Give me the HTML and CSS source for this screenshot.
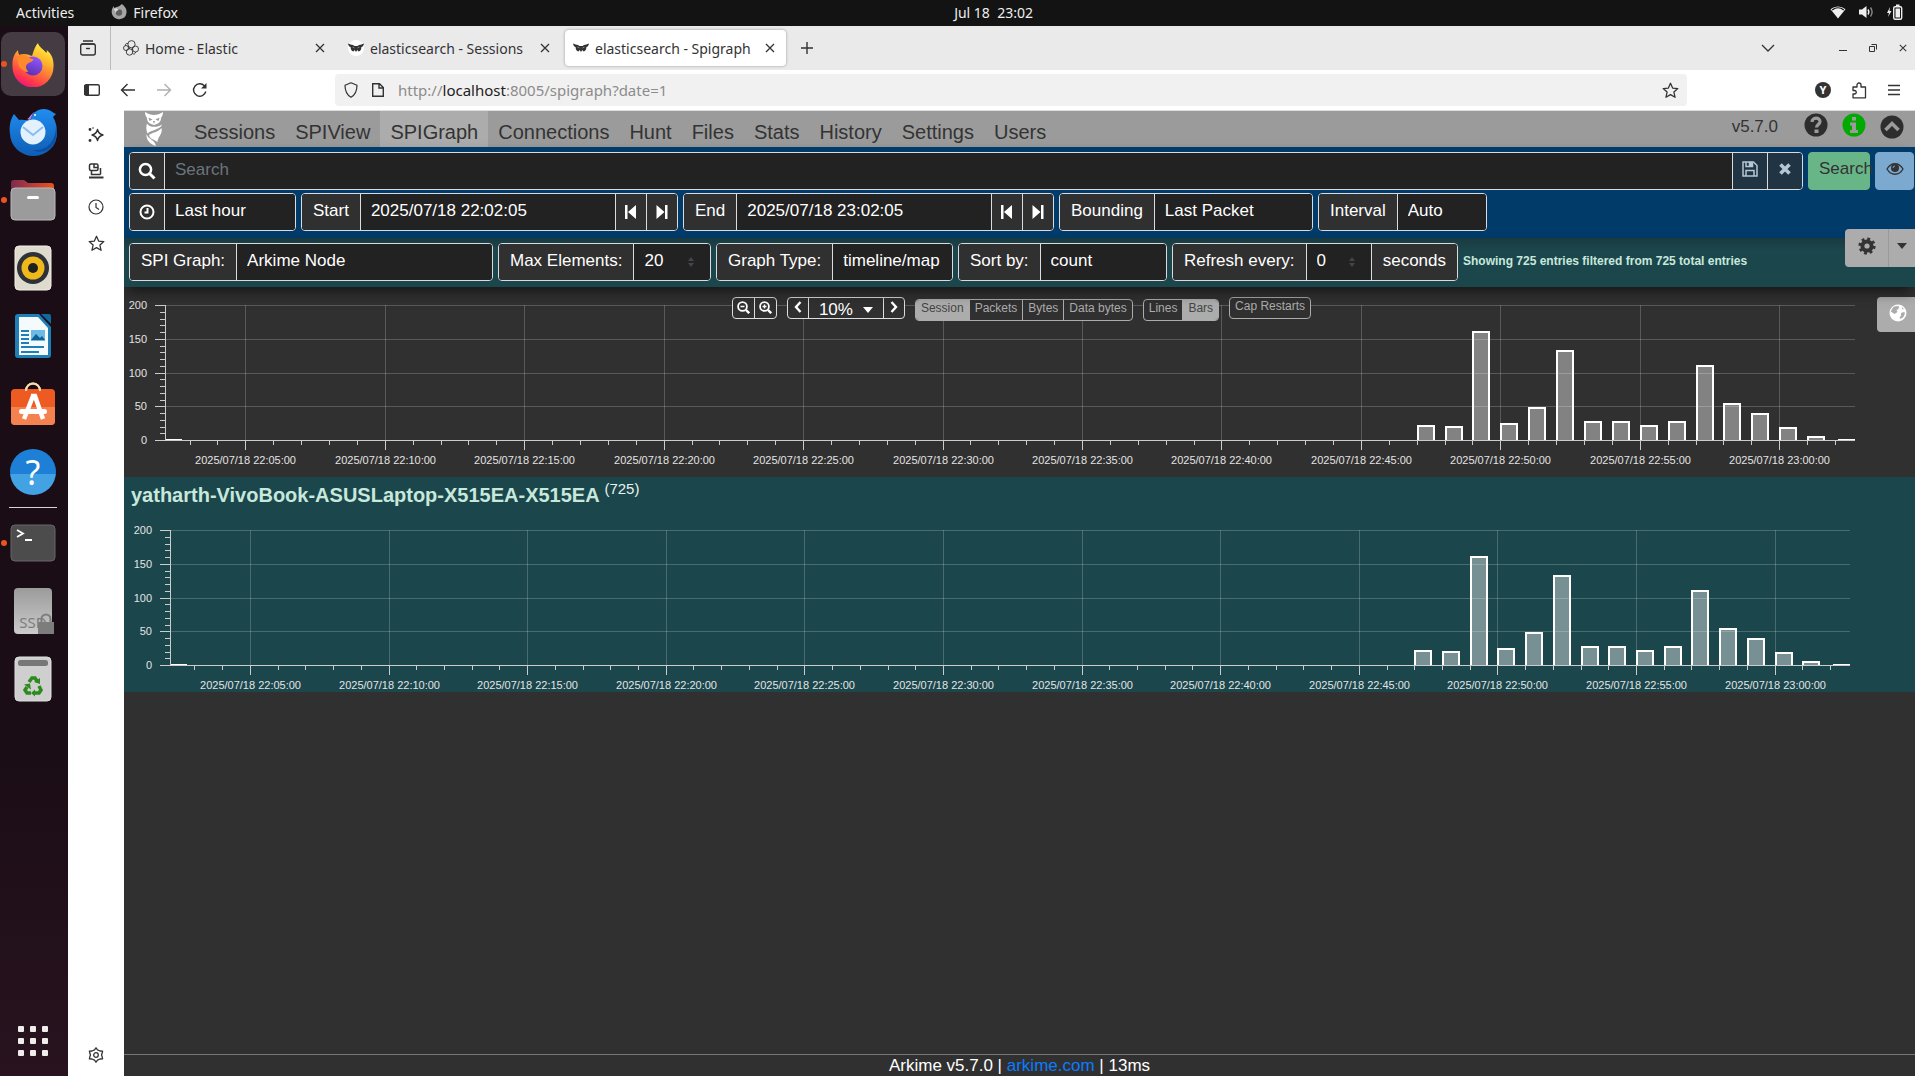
FILE: index.html
```html
<!DOCTYPE html>
<html lang="en">
<head>
<meta charset="utf-8">
<title>elasticsearch - Spigraph</title>
<link rel="stylesheet" href="styles.css">
</head>
<body>
<svg class="defs" aria-hidden="true">
  <defs>
    <linearGradient id="fire" x1="0.8" y1="0" x2="0.3" y2="1"><stop offset="0" stop-color="#fff44f"/><stop offset=".3" stop-color="#ffc02c"/><stop offset=".6" stop-color="#ff7139"/><stop offset=".85" stop-color="#ff3150"/><stop offset="1" stop-color="#e31587"/></linearGradient>
    <linearGradient id="purple" x1="0.7" y1="0" x2="0.3" y2="1"><stop offset="0" stop-color="#9059ff"/><stop offset="1" stop-color="#5b2fae"/></linearGradient>
    <linearGradient id="blue" x1="0" y1="0" x2="0" y2="1"><stop offset="0" stop-color="#1f8df0"/><stop offset="1" stop-color="#0f5db5"/></linearGradient>
    <linearGradient id="folder" x1="0" y1="0" x2="1" y2="0"><stop offset="0" stop-color="#7d2a50"/><stop offset="1" stop-color="#e95420"/></linearGradient>
  </defs>
  <symbol id="i-x" viewBox="0 0 10 10"><path d="M1 1l8 8M9 1L1 9" fill="none" stroke="currentColor" stroke-width="1.3"/></symbol>
  <symbol id="i-owl" viewBox="0 0 16 16"><circle cx="8" cy="8" r="8" fill="#fff"/><path d="M0 3.500c2 .8 3.500 1.300 5 1.500l1.500 1h3L11 5c1.500-.2 3-.7 5-1.500-.3 2-1.300 3.200-2.700 3.800.2 2.200-.8 4-2.800 4.200L9.300 10 8 12l-1.300-2-1.200 1.500c-2-.2-3-2-2.800-4.200C1.300 6.700.3 5.500 0 3.500z" fill="#333"/><path d="M4.500 7l2 1M11.500 7l-2 1" stroke="#aaa" stroke-width=".7"/></symbol>
  <symbol id="i-star" viewBox="0 0 16 16"><path d="M8 1.200l2 4.500 4.900.5-3.700 3.300 1.100 4.900L8 11.900l-4.300 2.500 1.100-4.900L1.100 6.200 6 5.700z" fill="none" stroke="currentColor" stroke-width="1.200" stroke-linejoin="round"/></symbol>
  <symbol id="i-prev" viewBox="0 0 12 16"><path d="M0 1h2.500v14H0zM11 1v14L3 8z" fill="currentColor"/></symbol>
  <symbol id="i-next" viewBox="0 0 12 16"><path d="M9 1h2.500v14H9zM.5 1v14l8-7z" fill="currentColor"/></symbol>
  <symbol id="i-spin" viewBox="0 0 8 12"><path d="M4 1l3 4H1zM4 11l3-4H1z" fill="#42464b"/></symbol>
</svg>

<header class="topbar">
  <div class="topbar-left">
    <button class="plain">Activities</button>
    <button class="plain app"><svg width="16" height="16" viewBox="0 0 16 16"><path d="M11 0c3 2.500 5 5 4.500 9A7.500 7.500 0 0 1 1 10C0 7 1 4 3 2v2l3-1c2-.5 3-1.500 5-3z" fill="#a5a5a5"/><circle cx="8" cy="8.500" r="3.200" fill="#5e5e5e"/><path d="M3 5c2-1 4 0 5 1-2 0-3 1-3 3" fill="#ddd"/></svg>Firefox</button>
  </div>
  <button class="plain clock">Jul 18&nbsp; 23:02</button>
  <div class="topbar-right">
    <svg width="16" height="14" viewBox="0 0 16 14"><path d="M8 13.500L.5 4.200a11.500 11.500 0 0 1 15 0z" fill="#eee"/><path d="M2.200 4.900a9.500 9.500 0 0 1 11.600 0" fill="none" stroke="#131313" stroke-width="1.300"/></svg>
    <svg width="16" height="14" viewBox="0 0 16 14"><path d="M1 4.500h3L8.500 1v12L4 9.500H1z" fill="#eee"/><path d="M10 4.500q1.700 2.500 0 5" fill="none" stroke="#eee" stroke-width="1.400"/><path d="M12.500 2.500q3.200 4.500 0 9" fill="none" stroke="#888" stroke-width="1.400"/></svg>
    <svg width="17" height="16" viewBox="0 0 17 16"><path d="M4 3L1 9h2l-1 4 3.500-6H3.500z" fill="#eee"/><rect x="7.700" y="2.700" width="8" height="12.600" rx="1.500" fill="none" stroke="#eee" stroke-width="1.400"/><path d="M10 .5h3.500V2H10zM9.500 4.500h4.500v9H9.500z" fill="#eee"/></svg>
  </div>
</header>

<div class="desktop">
  <nav class="dock" aria-label="Dock">
    <button class="dock-item active running" aria-label="Firefox">
      <svg width="46" height="46" viewBox="0 0 46 46"><path d="M28 2c1 4 5 6 8 9.500 1 1 1-1.500.6-2.500C42 13 44 19 43.500 26A20.500 20.500 0 0 1 2.500 26C2 18 4 13 8 9c0 3 1 5 2 5 4-2 8-.5 12 1 2-6 3-10 6-13z" fill="url(#fire)"/><circle cx="23" cy="25" r="9.500" fill="url(#purple)"/><path d="M9 14c4-1 7 0 9.500 2.500 2 1.500 4 1 5 2-1 3-5 2.500-6 4.500-3 2-1 6 1 8-7 0-13-7-9.500-17z" fill="#ff8a2b"/></svg>
    </button>
    <button class="dock-item" aria-label="Thunderbird">
      <svg width="50" height="50" viewBox="0 0 50 50"><path d="M6 7l5 6c4-1 8 1 12 0 1-7 6-11 13-11 5 0 8 3 12 5l-3 3c3 5 4 10 4 16a23 22 0 0 1-47 1C1 20 2 13 6 7z" fill="url(#blue)"/><path d="M48 18c0 18-10 26-23 25 12 6 24-3 24-20z" fill="#0d4f9f"/><circle cx="25" cy="25" r="12.500" fill="#e3f1ff"/><path d="M15 20l10 8 10-8" fill="none" stroke="#8bbcf0" stroke-width="2"/><path d="M19 12c3-1 4-6 8-7-4 3-3 6-5 8z" fill="#a78bfa"/><circle cx="27" cy="8" r="1" fill="#fff"/></svg>
    </button>
    <button class="dock-item running" aria-label="Files">
      <svg width="46" height="42" viewBox="0 0 46 42"><path d="M1 12V4a3 3 0 0 1 3-3h10l4 3h23a3 3 0 0 1 3 3v9z" fill="url(#folder)"/><rect x="1" y="9" width="44" height="32" rx="4" fill="#9b9b9b" stroke="#b9b9b9"/><rect x="17" y="17" width="12" height="3" rx="1.500" fill="#fff"/></svg>
    </button>
    <button class="dock-item" aria-label="Rhythmbox">
      <svg width="38" height="46" viewBox="0 0 38 46"><rect x="1" y="1" width="36" height="44" rx="4" fill="#dedace" stroke="#f2efe6"/><circle cx="19" cy="23" r="16" fill="#2e3138"/><circle cx="19" cy="23" r="11.500" fill="#efb91c"/><circle cx="19" cy="23" r="5" fill="#202020"/></svg>
    </button>
    <button class="dock-item" aria-label="LibreOffice Writer">
      <svg width="38" height="46" viewBox="0 0 38 46"><path d="M4 1h21l12 13v28a3 3 0 0 1-3 3H4a3 3 0 0 1-3-3V4a3 3 0 0 1 3-3z" fill="#1f80b8"/><path d="M27 1h8q2 0 2 2v8z" fill="#0e6a9f"/><path d="M5 4h19l10 11v27H5z" fill="#f5fafd"/><path d="M7 18h8M7 22h8M7 26h8M7 30h8M7 34h23M7 39h18" stroke="#1f80b8" stroke-width="2"/><rect x="17" y="17" width="14" height="11" fill="#6dbbe5"/><path d="M17 27l5-6 4 4 2-2 3 4z" fill="#0e5f92"/></svg>
    </button>
    <button class="dock-item" aria-label="Ubuntu Software">
      <svg width="46" height="44" viewBox="0 0 46 44"><path d="M16 9c0-10 14-10 14 0" fill="none" stroke="#f6dcae" stroke-width="2"/><rect x="1" y="7" width="44" height="36" rx="4" fill="#ee5b22"/><path d="M1 25h44v14a4 4 0 0 1-4 4H5a4 4 0 0 1-4-4z" fill="#f3824f"/><path d="M21 14h4l8 23M23 14l-9 23" fill="none" stroke="#fff" stroke-width="4.500"/><rect x="9" y="27" width="28" height="5" rx="2.500" fill="#fff"/><path d="M16 9c0-10 14-10 14 0" fill="none" stroke="#f6dcae" stroke-width="2"/></svg>
    </button>
    <button class="dock-item help" aria-label="Help">?</button>
    <hr class="dock-sep">
    <button class="dock-item running" aria-label="Terminal">
      <svg width="46" height="38" viewBox="0 0 46 38"><rect x="1" y="1" width="44" height="36" rx="4" fill="#4c4c4c" stroke="#666"/><path d="M7 6l6 3.500L7 13M15 16h7" fill="none" stroke="#fff" stroke-width="1.800"/></svg>
    </button>
    <button class="dock-item ssd" aria-label="SSD drive"><span class="ssd-label">SSD</span>
      <svg class="lock" width="16" height="22" viewBox="0 0 16 22"><path d="M3.500 10V6a4.500 4.500 0 0 1 9 0v4" fill="none" stroke="#7d7d7d" stroke-width="2"/><path d="M0 9h16v12H0z" fill="#7d7d7d"/></svg>
    </button>
    <button class="dock-item" aria-label="Trash">
      <svg width="38" height="46" viewBox="0 0 38 46"><rect x="1" y="1" width="36" height="44" rx="4" fill="#cfcfcf" stroke="#dedede"/><rect x="4" y="4" width="30" height="6" rx="2.500" fill="#777"/><g fill="none" stroke="#2d8a1f" stroke-width="3.500"><path d="M15 26l3-4h3l2 3"/><path d="M25 30l2 4-2 3h-4"/><path d="M17 37h-4l-2-3 2-3"/></g><path d="M26 22v6l-6-2zM21 33.500v7l-4-3.500zM10 28.500l6-1 1 6z" fill="#2d8a1f"/></svg>
    </button>
    <button class="dock-item apps" aria-label="Show Applications">
      <svg width="30" height="30" viewBox="0 0 30 30" fill="#efedec"><rect width="6" height="6" rx="1"/><rect x="12" width="6" height="6" rx="1"/><rect x="24" width="6" height="6" rx="1"/><rect y="12" width="6" height="6" rx="1"/><rect x="12" y="12" width="6" height="6" rx="1"/><rect x="24" y="12" width="6" height="6" rx="1"/><rect y="24" width="6" height="6" rx="1"/><rect x="12" y="24" width="6" height="6" rx="1"/><rect x="24" y="24" width="6" height="6" rx="1"/></svg>
    </button>
  </nav>

  <div class="browser">
    <div class="tabstrip">
      <button class="plain recent" aria-label="Recent tabs"><svg width="16" height="16" viewBox="0 0 16 16" fill="none" stroke="currentColor" stroke-width="1.400"><path d="M3 1h10M1.500 4h13"/><rect x=".7" y="4" width="14.600" height="11" rx="2"/><path d="M6 8.500h4"/></svg></button>
      <div class="tabs">
        <div class="tab"><svg width="16" height="16" viewBox="0 0 16 16" fill="none" stroke="currentColor" stroke-width=".9"><circle cx="8.500" cy="4.200" r="3.600"/><circle cx="3" cy="8" r="2.500"/><circle cx="12.500" cy="9" r="3"/><circle cx="6.500" cy="12" r="3.200"/><path d="M5.200 6l1.500 3M9 7.700L9.600 10M2.500 5.500C2 4.500 3 3 5 3.500M9.500 13.500c1.500 1 3 .5 3-1.500"/></svg><span class="tab-title">Home - Elastic</span><button class="plain" aria-label="Close tab"><svg width="10" height="10"><use href="#i-x"/></svg></button></div>
        <div class="tab"><svg width="16" height="16"><use href="#i-owl"/></svg><span class="tab-title">elasticsearch - Sessions</span><button class="plain" aria-label="Close tab"><svg width="10" height="10"><use href="#i-x"/></svg></button></div>
        <div class="tab current"><svg width="16" height="16"><use href="#i-owl"/></svg><span class="tab-title">elasticsearch - Spigraph</span><button class="plain" aria-label="Close tab"><svg width="10" height="10"><use href="#i-x"/></svg></button></div>
      </div>
      <button class="plain newtab" aria-label="New tab"><svg width="12" height="12" viewBox="0 0 12 12"><path d="M6 0v12M0 6h12" stroke="currentColor" stroke-width="1.400"/></svg></button>
      <div class="window-controls">
        <button class="plain list-tabs" aria-label="List all tabs"><svg width="14" height="8" viewBox="0 0 14 8"><path d="M1 1l6 6 6-6" fill="none" stroke="currentColor" stroke-width="1.300"/></svg></button>
        <button class="plain" aria-label="Minimize"><svg width="8" height="10" viewBox="0 0 8 10"><path d="M0 7.500h8" stroke="currentColor"/></svg></button>
        <button class="plain" aria-label="Restore"><svg width="8" height="8" viewBox="0 0 8 8" fill="none" stroke="currentColor"><path d="M.5 2.500h5v5h-5zM2.500.5h5v5"/></svg></button>
        <button class="plain" aria-label="Close window"><svg width="8" height="8"><use href="#i-x"/></svg></button>
      </div>
    </div>

    <div class="toolbar">
      <div class="nav-buttons">
        <button class="plain" aria-label="Sidebar"><svg width="16" height="12" viewBox="0 0 16 12"><rect x=".7" y=".7" width="14.600" height="10.600" rx="1.500" fill="none" stroke="currentColor" stroke-width="1.400"/><path d="M0 1h5v10H0z" fill="currentColor"/></svg></button>
        <button class="plain" aria-label="Back"><svg width="16" height="14" viewBox="0 0 16 14"><path d="M15 7H1.500M7.500 1l-6 6 6 6" fill="none" stroke="currentColor" stroke-width="1.400"/></svg></button>
        <button class="plain" disabled aria-label="Forward"><svg width="16" height="14" viewBox="0 0 16 14"><path d="M1 7h13.500M8.500 1l6 6-6 6" fill="none" stroke="currentColor" stroke-width="1.400"/></svg></button>
        <button class="plain" aria-label="Reload"><svg width="16" height="16" viewBox="0 0 16 16"><path d="M13.800 9.500A6.200 6.200 0 1 1 12.500 4" fill="none" stroke="currentColor" stroke-width="1.400"/><path d="M14.500 1v5.500H9z" fill="currentColor"/></svg></button>
      </div>
      <div class="urlbar">
        <svg width="14" height="16" viewBox="0 0 14 16"><path d="M7 .8l6 2.400c0 6-1.500 9.500-6 12-4.500-2.500-6-6-6-12z" fill="none" stroke="currentColor" stroke-width="1.200" stroke-linejoin="round"/></svg>
        <svg width="12" height="14" viewBox="0 0 12 14"><path d="M1.500.7h6L11.300 4.500v8.800H.7V.7zM7 .7v4.300h4.300" fill="none" stroke="currentColor" stroke-width="1.400"/></svg>
        <a class="url" href="#">http://<b>localhost</b>:8005/spigraph?date=1</a>
        <button class="plain" aria-label="Bookmark"><svg width="17" height="17"><use href="#i-star"/></svg></button>
      </div>
      <div class="toolbar-right">
        <button class="avatar" aria-label="Account">Y</button>
        <button class="plain" aria-label="Extensions"><svg width="15" height="17" viewBox="0 0 15 17"><path d="M1 15.800V12h1.500a1.700 1.700 0 0 0 0-3.500H1V5h4V3a2 2 0 0 1 4 0v2h4.500v10.800z" fill="none" stroke="currentColor" stroke-width="1.300" stroke-linejoin="round"/></svg></button>
        <button class="plain" aria-label="Menu"><svg width="12" height="12" viewBox="0 0 12 12"><path d="M0 1.500h12M0 6h12M0 10.500h12" stroke="currentColor" stroke-width="1.300"/></svg></button>
      </div>
    </div>

    <div class="browser-body">
      <aside class="sidebar">
        <button class="plain" aria-label="AI chatbot"><svg width="16" height="16" viewBox="0 0 16 16"><path d="M9.500 2.500Q10.500 7 15 8q-4.500 1-5.500 5.500Q8.500 9 4 8 8.500 7 9.500 2.500z" fill="none" stroke="currentColor" stroke-width="1.400" stroke-linejoin="round"/><circle cx="2" cy="2.500" r="1.400" fill="currentColor"/><circle cx="2" cy="13.500" r="1.400" fill="currentColor"/><circle cx="5" cy="1" r=".8" fill="currentColor"/></svg></button>
        <button class="plain" aria-label="Synced tabs"><svg width="16" height="16" viewBox="0 0 16 16" fill="none" stroke="currentColor" stroke-width="1.500"><rect x="1.500" y="1" width="8.500" height="6.500" rx="1.500"/><path d="M6 1v3.500h4M12.500 5v6.500M3.500 7.500v4h9"/><path d="M1 14.500h14.500" stroke-width="2"/></svg></button>
        <button class="plain" aria-label="History"><svg width="16" height="16" viewBox="0 0 16 16" fill="none" stroke="currentColor" stroke-width="1.200"><circle cx="8" cy="8" r="7"/><path d="M8 4v4.500l3 2"/></svg></button>
        <button class="plain" aria-label="Bookmarks"><svg width="17" height="17"><use href="#i-star"/></svg></button>
        <button class="plain customize" aria-label="Customize sidebar"><svg width="16" height="16" viewBox="0 0 16 16" fill="none" stroke="currentColor" stroke-width="1.300" stroke-linejoin="round"><path d="M6.500 2.800L8 .8l1.500 2L12 4l2.600.1L14 6.800 13.500 8l.5 1.200.6 2.700L12 12l-2.500 1.200L8 15.200l-1.500-2L4 12l-2.600-.1L2 9.200 2.500 8 2 6.800 1.400 4.100 4 4z"/><circle cx="8" cy="8" r="2.300"/></svg></button>
      </aside>

      <div class="arkime">
        <nav class="navbar">
          <a class="brand" href="#" aria-label="Arkime"><svg width="18" height="34" viewBox="0 0 18 34" fill="#fff"><path d="M0 0c3 2 6 3 9 3s6-1 9-3c0 3-1 4.500-2 6 0 4-3 6-7 7C5 12 2 10 2 6 1 4.500 0 3 0 0z"/><path d="M3.500 5.500l4 2-3 1.500zM14.500 5.500l-4 2 3 1.500zM8 9h2l-1 3z" fill="#9b9b9b"/><path d="M2 11.500c2 4 10 4.500 15 1-1 5-11 5.500-14.500 9C1 18 1 14 2 11.500zM16.500 16c1.500 6-4 9-4 14-4-3-8-3-8.500-7 4-3 9.500-3 12.500-7zM1.500 22c2 6 8 5 9.500 12C5 32 1 28 1.500 22z"/></svg></a>
          <a href="#">Sessions</a><a href="#">SPIView</a><a class="current" href="#">SPIGraph</a><a href="#">Connections</a><a href="#">Hunt</a><a href="#">Files</a><a href="#">Stats</a><a href="#">History</a><a href="#">Settings</a><a href="#">Users</a>
          <div class="nav-right">
            <span class="version">v5.7.0</span>
            <button class="round" aria-label="Help"><svg width="24" height="24" viewBox="0 0 24 24"><circle cx="12" cy="12" r="11.500" fill="#2d2d2d"/><path d="M8 9c0-5 8-5 8-.5 0 3-3.500 3-3.500 6" fill="none" stroke="#9b9b9b" stroke-width="3.200"/><rect x="10.500" y="16.500" width="4" height="3.500" fill="#9b9b9b"/></svg></button>
            <button class="round" aria-label="Status"><svg width="24" height="24" viewBox="0 0 24 24"><circle cx="12" cy="12" r="11.500" fill="#0a0"/><path d="M10 4h4v3.500h-4zM8 9.500h6V17h2v3H8v-3h2v-4.500H8z" fill="#9b9b9b"/></svg></button>
            <button class="round collapse" aria-label="Collapse"><svg width="24" height="24" viewBox="0 0 24 24"><circle cx="12" cy="12" r="11.500" fill="#2d2d2d"/><path d="M5.500 15L12 8.500l6.500 6.500" fill="none" stroke="#9b9b9b" stroke-width="3.500"/></svg></button>
          </div>
        </nav>

        <form class="search-panel">
          <div class="row">
            <div class="group grow">
              <label class="addon icon" for="q" aria-label="Search"><svg width="18" height="18" viewBox="0 0 18 18"><circle cx="7.500" cy="7.500" r="5.600" fill="none" stroke="currentColor" stroke-width="2.500"/><path d="M11.500 11.500l5 5" stroke="currentColor" stroke-width="3"/></svg></label>
              <input id="q" class="field grow" type="text" placeholder="Search">
              <button class="addon tool" type="button" aria-label="Save view"><svg width="16" height="16" viewBox="0 0 16 16" fill="none" stroke="currentColor" stroke-width="1.500"><path d="M1 1h10.500L15 4.500V15H1z"/><path d="M4 15V9.500h8V15M4 1v4.500h6.500V1" /><path d="M7.500 1.500h2v3h-2z" fill="currentColor"/></svg></button>
              <button class="addon tool" type="button" aria-label="Clear"><svg width="12" height="12" viewBox="0 0 12 12"><path d="M1.500 1.500l9 9M10.500 1.500l-9 9" stroke="currentColor" stroke-width="3.600"/></svg></button>
            </div>
            <button class="btn search-btn" type="button">Search</button>
            <button class="btn view-btn" type="button" aria-label="Views"><svg width="18" height="14" viewBox="0 0 18 14"><path d="M1 7c4-7 12-7 16 0-4 7-12 7-16 0z" fill="none" stroke="currentColor" stroke-width="1.300"/><circle cx="9" cy="6" r="4" fill="currentColor"/><path d="M7 6a2 2 0 0 1 2-2" fill="none" stroke="#7ba9cf"/></svg></button>
          </div>
          <div class="row">
            <div class="group w-time">
              <label class="addon icon" for="range" aria-label="Time range"><svg width="16" height="16" viewBox="0 0 16 16" fill="none" stroke="currentColor" stroke-width="2"><circle cx="8" cy="8" r="6.500"/><path d="M8.500 4v4.500H5.500"/></svg></label>
              <select id="range" class="field grow"><option>Last hour</option></select>
            </div>
            <div class="group w-start">
              <label class="addon" for="start">Start</label>
              <input id="start" class="field grow" type="text" value="2025/07/18 22:02:05">
              <button class="addon step" type="button" aria-label="Start of day"><svg width="12" height="16"><use href="#i-prev"/></svg></button>
              <button class="addon step" type="button" aria-label="End of day"><svg width="12" height="16"><use href="#i-next"/></svg></button>
            </div>
            <div class="group w-end">
              <label class="addon" for="end">End</label>
              <input id="end" class="field grow" type="text" value="2025/07/18 23:02:05">
              <button class="addon step" type="button" aria-label="Start of day"><svg width="12" height="16"><use href="#i-prev"/></svg></button>
              <button class="addon step" type="button" aria-label="End of day"><svg width="12" height="16"><use href="#i-next"/></svg></button>
            </div>
            <div class="group w-bound"><label class="addon" for="bounding">Bounding</label><select id="bounding" class="field grow"><option>Last Packet</option></select></div>
            <div class="group w-interval"><label class="addon" for="interval">Interval</label><select id="interval" class="field grow"><option>Auto</option></select></div>
          </div>
        </form>

        <form class="graph-panel row">
          <div class="group w-spi"><label class="addon" for="spi">SPI Graph:</label><input id="spi" class="field grow" type="text" value="Arkime Node"></div>
          <div class="group w-max"><label class="addon" for="max">Max Elements:</label><select id="max" class="field grow"><option>20</option></select><svg class="spin" width="8" height="12"><use href="#i-spin"/></svg></div>
          <div class="group w-type"><label class="addon" for="type">Graph Type:</label><select id="type" class="field grow"><option>timeline/map</option></select></div>
          <div class="group w-sort"><label class="addon" for="sort">Sort by:</label><select id="sort" class="field grow"><option>count</option></select></div>
          <div class="group w-refresh"><label class="addon" for="refresh">Refresh every:</label><select id="refresh" class="field grow"><option>0</option></select><svg class="spin" width="8" height="12"><use href="#i-spin"/></svg><span class="addon">seconds</span></div>
          <strong class="showing">Showing 725 entries filtered from 725 total entries</strong>
          <div class="actions">
            <button type="button" aria-label="Actions"><svg width="18" height="18" viewBox="0 0 18 18"><circle cx="9" cy="9" r="4.600" fill="none" stroke="currentColor" stroke-width="4"/><circle cx="9" cy="9" r="7.300" fill="none" stroke="currentColor" stroke-width="2.600" stroke-dasharray="2.870 2.870"/></svg></button>
            <button type="button" class="caret" aria-label="More actions"><svg width="10" height="6" viewBox="0 0 10 6"><path d="M0 0h10L5 6z" fill="currentColor"/></svg></button>
          </div>
        </form>

        <main>
          <section class="total">
            <div class="chart" data-left="41" data-right="60" data-top="18"></div>
            <div class="chart-tools">
              <div class="mini white">
                <button aria-label="Zoom out"><svg width="13" height="13" viewBox="0 0 13 13" fill="none" stroke="currentColor"><circle cx="5.500" cy="5.500" r="4.400" stroke-width="1.800"/><path d="M3.500 5.500h4" stroke-width="1.400"/><path d="M9 9l3.200 3.200" stroke-width="2.400"/></svg></button>
                <button aria-label="Zoom in"><svg width="13" height="13" viewBox="0 0 13 13" fill="none" stroke="currentColor"><circle cx="5.500" cy="5.500" r="4.400" stroke-width="1.800"/><path d="M3.500 5.500h4M5.500 3.500v4" stroke-width="1.400"/><path d="M9 9l3.200 3.200" stroke-width="2.400"/></svg></button>
              </div>
              <div class="mini white pan">
                <button aria-label="Pan left"><svg width="8" height="12" viewBox="0 0 8 12"><path d="M6.500 1L2 6l4.500 5" fill="none" stroke="currentColor" stroke-width="2.400"/></svg></button>
                <button class="percent">10%<svg width="10" height="6" viewBox="0 0 10 6"><path d="M0 0h10L5 6z" fill="currentColor"/></svg></button>
                <button aria-label="Pan right"><svg width="8" height="12" viewBox="0 0 8 12"><path d="M1.500 1L6 6l-4.500 5" fill="none" stroke="currentColor" stroke-width="2.400"/></svg></button>
              </div>
              <div class="mini low"><button class="on">Session</button><button>Packets</button><button>Bytes</button><button>Data bytes</button></div>
              <div class="mini low"><button>Lines</button><button class="on">Bars</button></div>
              <div class="mini"><button>Cap Restarts</button></div>
            </div>
            <button class="globe" aria-label="Map"><svg width="18" height="18" viewBox="0 0 18 18"><circle cx="9" cy="9" r="8.500" fill="#fff"/><path d="M5 2.500l5-.5-.5 3-2 1 1 2-3 2-3-2-1 .5L3 5zM12 9l3-1 1 1-1.500 4-3 2-1-2 1.500-1zM13 3l2 2.500-2-.5z" fill="#acacac"/></svg></button>
          </section>
          <section class="node">
            <h2>yatharth-VivoBook-ASUSLaptop-X515EA-X515EA <sup>(725)</sup></h2>
            <div class="chart" data-left="46" data-right="65" data-top="9"></div>
          </section>
        </main>

        <footer>Arkime v5.7.0 | <a href="#">arkime.com</a> | 13ms</footer>
      </div>
    </div>
  </div>
</div>
<script src="charts.js"></script>
</body>
</html>
```
FILE: styles.css
```css
* { box-sizing: border-box; }
body {
  margin: 0;
  height: 100vh;
  display: flex;
  flex-direction: column;
  overflow: hidden;
  font: 14px "Noto Sans", sans-serif;
  background: #1b0d15;
}
button, input, select { font: inherit; color: inherit; margin: 0; }
button { cursor: pointer; }
svg { display: block; flex: none; }
.defs { position: absolute; width: 0; height: 0; }
.plain { border: 0; padding: 0; background: none; display: flex; align-items: center; justify-content: center; }

.topbar {
  height: 26px;
  flex: none;
  display: grid;
  grid-template-columns: 937fr auto 869fr;
  align-items: center;
  padding: 0 12px 2px 16px;
  background: #131313;
  color: #eee;
}
.topbar-left { display: flex; gap: 37px; }
.app { gap: 6px; }
.topbar-right { display: flex; justify-content: flex-end; align-items: center; gap: 12px; }

.desktop { flex: 1; display: flex; min-height: 0; }
.dock {
  width: 68px;
  flex: none;
  display: flex;
  flex-direction: column;
  align-items: flex-start;
  gap: 4px;
  padding: 6px 0 3px 1px;
  background: linear-gradient(#1b0d15 70%, #28131f);
}
.dock-item {
  position: relative;
  width: 64px;
  height: 64px;
  flex: none;
  border: 0;
  border-radius: 10px;
  padding: 0;
  background: none;
  display: flex;
  align-items: center;
  justify-content: center;
}
.dock-item.active { background: #453b42; }
.running::before {
  content: "";
  position: absolute;
  left: 0;
  top: 29px;
  width: 6px;
  height: 6px;
  border-radius: 3px;
  background: #e95420;
}
.help {
  width: 46px;
  height: 46px;
  margin: 9px;
  border-radius: 23px;
  background: linear-gradient(#1d80d6 55%, #42a2e4 55%);
  color: #fff;
  font-size: 34px;
}
.dock-sep { width: 48px; height: 1px; margin: -1px 8px -1px; border: 0; background: #d8d4d6; }
.ssd { width: 38px; height: 46px; margin: 9px 13px; border-radius: 4px; background: linear-gradient(#9b9b9b, #cbcbcb); align-items: flex-end; }
.ssd-label { width: 30px; overflow: hidden; color: #7d7d7d; font-size: 15px; line-height: 24px; }
.lock { position: absolute; right: -2px; bottom: -1px; }
.apps { margin-top: auto; }

.browser { flex: 1; min-width: 0; display: flex; flex-direction: column; background: #fff; color: #333; }
.tabstrip { height: 44px; flex: none; display: flex; align-items: center; background: #eaeaeb; }
.recent { width: 43px; height: 44px; padding-right: 2px; border-right: 1px solid #bbb; }
.tabs { display: flex; gap: 4px; padding-left: 4px; }
.tab { width: 221px; height: 36px; display: flex; align-items: center; gap: 6px; padding: 0 11px 0 8px; border-radius: 4px; }
.tab.current { background: #fff; box-shadow: 0 0 3px #999; }
.tab-title { flex: 1; white-space: nowrap; }
.newtab { width: 42px; height: 36px; }
.window-controls { margin-left: auto; display: flex; align-items: center; gap: 22px; padding-right: 8px; }
.list-tabs { margin-right: 42px; }

.toolbar { height: 40px; flex: none; display: flex; align-items: center; }
.nav-buttons { display: flex; gap: 20px; width: 267px; padding-left: 16px; }
.toolbar button:disabled { color: #b0b0b0; }
.urlbar { flex: 1; height: 32px; display: flex; align-items: center; gap: 14px; padding: 0 8px 0 9px; border-radius: 4px; background: #f1f1f1; }
.url { flex: 1; color: #8c8c8c; text-decoration: none; font-size: 15px; }
.url b { color: #222; font-weight: 400; }
.toolbar-right { width: 228px; display: flex; justify-content: flex-end; align-items: center; gap: 21px; padding-right: 15px; }
.avatar { width: 16px; height: 16px; border: 0; border-radius: 8px; padding: 0; background: #333; color: #fff; font-size: 11px; font-weight: 700; line-height: 16px; }

.browser-body { flex: 1; display: flex; min-height: 0; }
.sidebar { width: 56px; flex: none; display: flex; flex-direction: column; align-items: center; gap: 20px; padding: 17px 0 13px; }
.customize { margin-top: auto; }

.arkime {
  flex: 1;
  min-width: 0;
  display: flex;
  flex-direction: column;
  border-top: 1px solid #ddd;
  background: #303030;
  color: #fff;
  font: 17px "Liberation Sans", Arial, sans-serif;
  overflow: hidden;
}
.navbar { height: 36px; flex: none; display: flex; background: #9b9b9b; color: #333; }
.navbar a { padding: 8px 10px 0; color: inherit; text-decoration: none; font-size: 20px; line-height: 26px; }
.navbar .brand { width: 60px; padding: 1px 0 0 21px; }
.navbar .current { background: #acacac; }
.nav-right { margin-left: auto; display: flex; align-items: flex-start; gap: 14px; padding: 2px 11px 0 0; }
.version { margin-right: 12px; line-height: 28px; }
.round { border: 0; padding: 0; background: none; }
.collapse { padding-top: 2px; }

.row { display: flex; gap: 5px; }
.search-panel {
  position: relative;
  z-index: 1;
  flex: none;
  display: flex;
  flex-direction: column;
  gap: 3px;
  padding: 5px 1px 7px 5px;
  background: #003b69;
  box-shadow: 0 6px 12px -4px #151515;
}
.graph-panel { position: relative; z-index: 2; flex: none; padding: 5px 0 6px 5px; background: linear-gradient(#193a40, #1b464c 12px); box-shadow: 0 8px 12px -4px #151515; }
.group { display: flex; height: 38px; border: 1px solid #d8dce0; border-radius: 4px; background: #222; overflow: hidden; position: relative; }
.grow { flex: 1; min-width: 0; }
.addon, .field { border: 0; border-radius: 0; height: 36px; padding: 0 11px 2px; line-height: 34px; white-space: nowrap; }
.addon { flex: none; background: #303030; color: #fff; }
.group > * + .addon, .group > * + .field { border-left: 1px solid #d8dce0; }
.field { width: 0; padding: 0 10px 2px; background: #222; color: #fff; appearance: none; outline: 0; }
.field::placeholder { color: #6c757d; }
.icon { width: 34px; padding: 0; display: flex; align-items: center; justify-content: center; }
.step { width: 31px; padding: 0; display: flex; align-items: center; justify-content: center; }
.tool { width: 35px; padding: 0 0 4px; display: flex; align-items: center; justify-content: center; background: #203444; color: #b3c7d6; }
.spin { position: absolute; right: 15px; top: 12px; }
.w-refresh .spin { right: 101px; }
.w-time { width: 167px; }
.w-start { width: 377px; }
.w-end { width: 371px; }
.w-bound { width: 254px; }
.w-interval { width: 169px; }
.w-spi { width: 364px; }
.w-max { width: 213px; }
.w-type { width: 237px; }
.w-sort { width: 209px; }
.w-refresh { width: 286px; }
.btn { height: 38px; border: 1px solid; border-radius: 4px; padding: 0 10px 4px; text-align: left; color: #333; }
.search-btn { width: 62px; background: #68b588; border-color: #68b588; }
.view-btn { width: 39px; background: #7ba9cf; border-color: #7ba9cf; display: flex; align-items: center; }
.view-btn svg { color: #333; }
.showing { color: #c8e8dc; font-size: 12px; line-height: 36px; white-space: nowrap; }
.actions { position: absolute; right: 0; top: -9px; width: 70px; height: 38px; display: flex; border-radius: 4px 0 0 4px; overflow: hidden; background: #acacac; color: #333; }
.actions button { flex: 1; border: 0; padding: 0 0 4px; background: none; display: flex; align-items: center; justify-content: center; }
.actions .caret { flex: none; width: 27px; border-left: 1px solid #999; }

main { flex: 1; min-height: 0; }
.total { position: relative; height: 190px; }
.chart { width: 100%; }
.chart svg { width: 100%; font-size: 11px; fill: #e4e4e4; }
.chart .grid { stroke: #fff; stroke-opacity: .2; }
.chart .axis { stroke: #ccc; fill: none; }
.chart .bar { fill: #fff; fill-opacity: .4; stroke: #fff; stroke-width: 2; }
.chart-tools { position: absolute; top: 10px; left: 0; right: 0; display: flex; justify-content: center; gap: 10px; padding-left: 4px; }
.mini { height: 22px; display: flex; border: 1px solid #acacac; border-radius: 4px; overflow: hidden; background: #303030; color: #acacac; font-size: 12px; }
.mini.low { margin-top: 2px; }
.mini button { border: 0; padding: 0 5px 4px; background: none; line-height: 16px; display: flex; align-items: center; }
.mini button + button { border-left: 1px solid; border-color: inherit; }
.mini .on { background: #acacac; color: #444; }
.mini.white { border-color: #ddd; color: #fff; }
.mini.white button { padding: 0 4px 2px; }
.mini.white button + button { border-color: #ddd; }
.mini.pan button { padding: 0 6px 2px; }
.mini.pan .percent { padding: 3px 10px 0; gap: 10px; font-size: 17px; }
.globe { position: absolute; right: 0; top: 10px; width: 38px; height: 35px; border: 0; border-radius: 4px 0 0 4px; padding: 0 0 4px 12px; background: #acacac; }
.node { height: 215px; background: #1b464c; }
h2 { margin: 0; height: 44px; padding: 0 0 0 7px; color: #c8e8dc; font-size: 20px; line-height: 36px; }
sup { color: #e6f2ee; font-size: 15px; font-weight: 400; line-height: 0; }

footer { height: 22px; flex: none; border-top: 1px solid #777; text-align: center; line-height: 22px; }
footer a { color: #0a7cff; text-decoration: none; }
```
FILE: charts.js
```js
const NS = 'http://www.w3.org/2000/svg';
const PLOT_HEIGHT = 135;
const MAX = 200;
const FIRST_BAR = 45;
const counts = [21, 19, 160, 24, 47, 132, 27, 26, 20, 27, 109, 53, 38, 18, 4];

function add(svg, name, attrs, text) {
  const el = document.createElementNS(NS, name);
  for (const key in attrs) el.setAttribute(key, attrs[key]);
  if (text) el.textContent = text;
  svg.appendChild(el);
}

function draw(box) {
  const left = Number(box.dataset.left);
  const top = Number(box.dataset.top);
  const right = box.clientWidth - Number(box.dataset.right);
  const base = top + PLOT_HEIGHT;
  // The axis starts a few seconds after 22:02 and ends one bar past 23:02
  const minute = (right - left) / 60.6;
  const x = m => left + (m - 0.1) * minute;
  const svg = document.createElementNS(NS, 'svg');
  svg.setAttribute('height', base + 28);

  for (let v = 0; v <= MAX; v += 10) {
    const y = Math.round(base - v / MAX * PLOT_HEIGHT) + 0.5;
    const major = v % 50 === 0;
    if (major) {
      if (v) add(svg, 'path', { class: 'grid', d: `M${left} ${y}H${right}` });
      add(svg, 'text', { x: left - 18, y: y + 3, 'text-anchor': 'end' }, String(v));
    }
    add(svg, 'path', { class: 'axis', d: `M${left - (major ? 10 : 5)} ${y}h${major ? 10 : 5}` });
  }

  for (let m = 1; m <= 60; m++) {
    const px = Math.floor(x(m)) + 0.5;
    const clock = 22 * 60 + 2 + m;
    const major = clock % 5 === 0;
    if (major) {
      const hh = Math.floor(clock / 60);
      const mm = String(clock % 60).padStart(2, '0');
      add(svg, 'path', { class: 'grid', d: `M${px} ${top}V${base}` });
      add(svg, 'text', { x: px, y: base + 24, 'text-anchor': 'middle' }, `2025/07/18 ${hh}:${mm}:00`);
    }
    add(svg, 'path', { class: 'axis', d: `M${px} ${base}v${major ? 10 : 5}` });
  }

  counts.forEach((count, i) => {
    const h = Math.round(count / MAX * PLOT_HEIGHT);
    const bx = Math.floor(x(FIRST_BAR + i)) + 1;
    add(svg, 'path', { class: 'bar', d: `M${bx} ${base}v${-h}h16v${h}` });
  });
  add(svg, 'path', { class: 'bar', d: `M${left} ${base}h17M${right - 17} ${base}h17` });
  add(svg, 'path', { class: 'axis', d: `M${left + 0.5} ${top}V${base + 0.5}H${right}` });
  box.replaceChildren(svg);
}

const drawAll = () => document.querySelectorAll('.chart').forEach(draw);
drawAll();
window.addEventListener('resize', drawAll);
```
